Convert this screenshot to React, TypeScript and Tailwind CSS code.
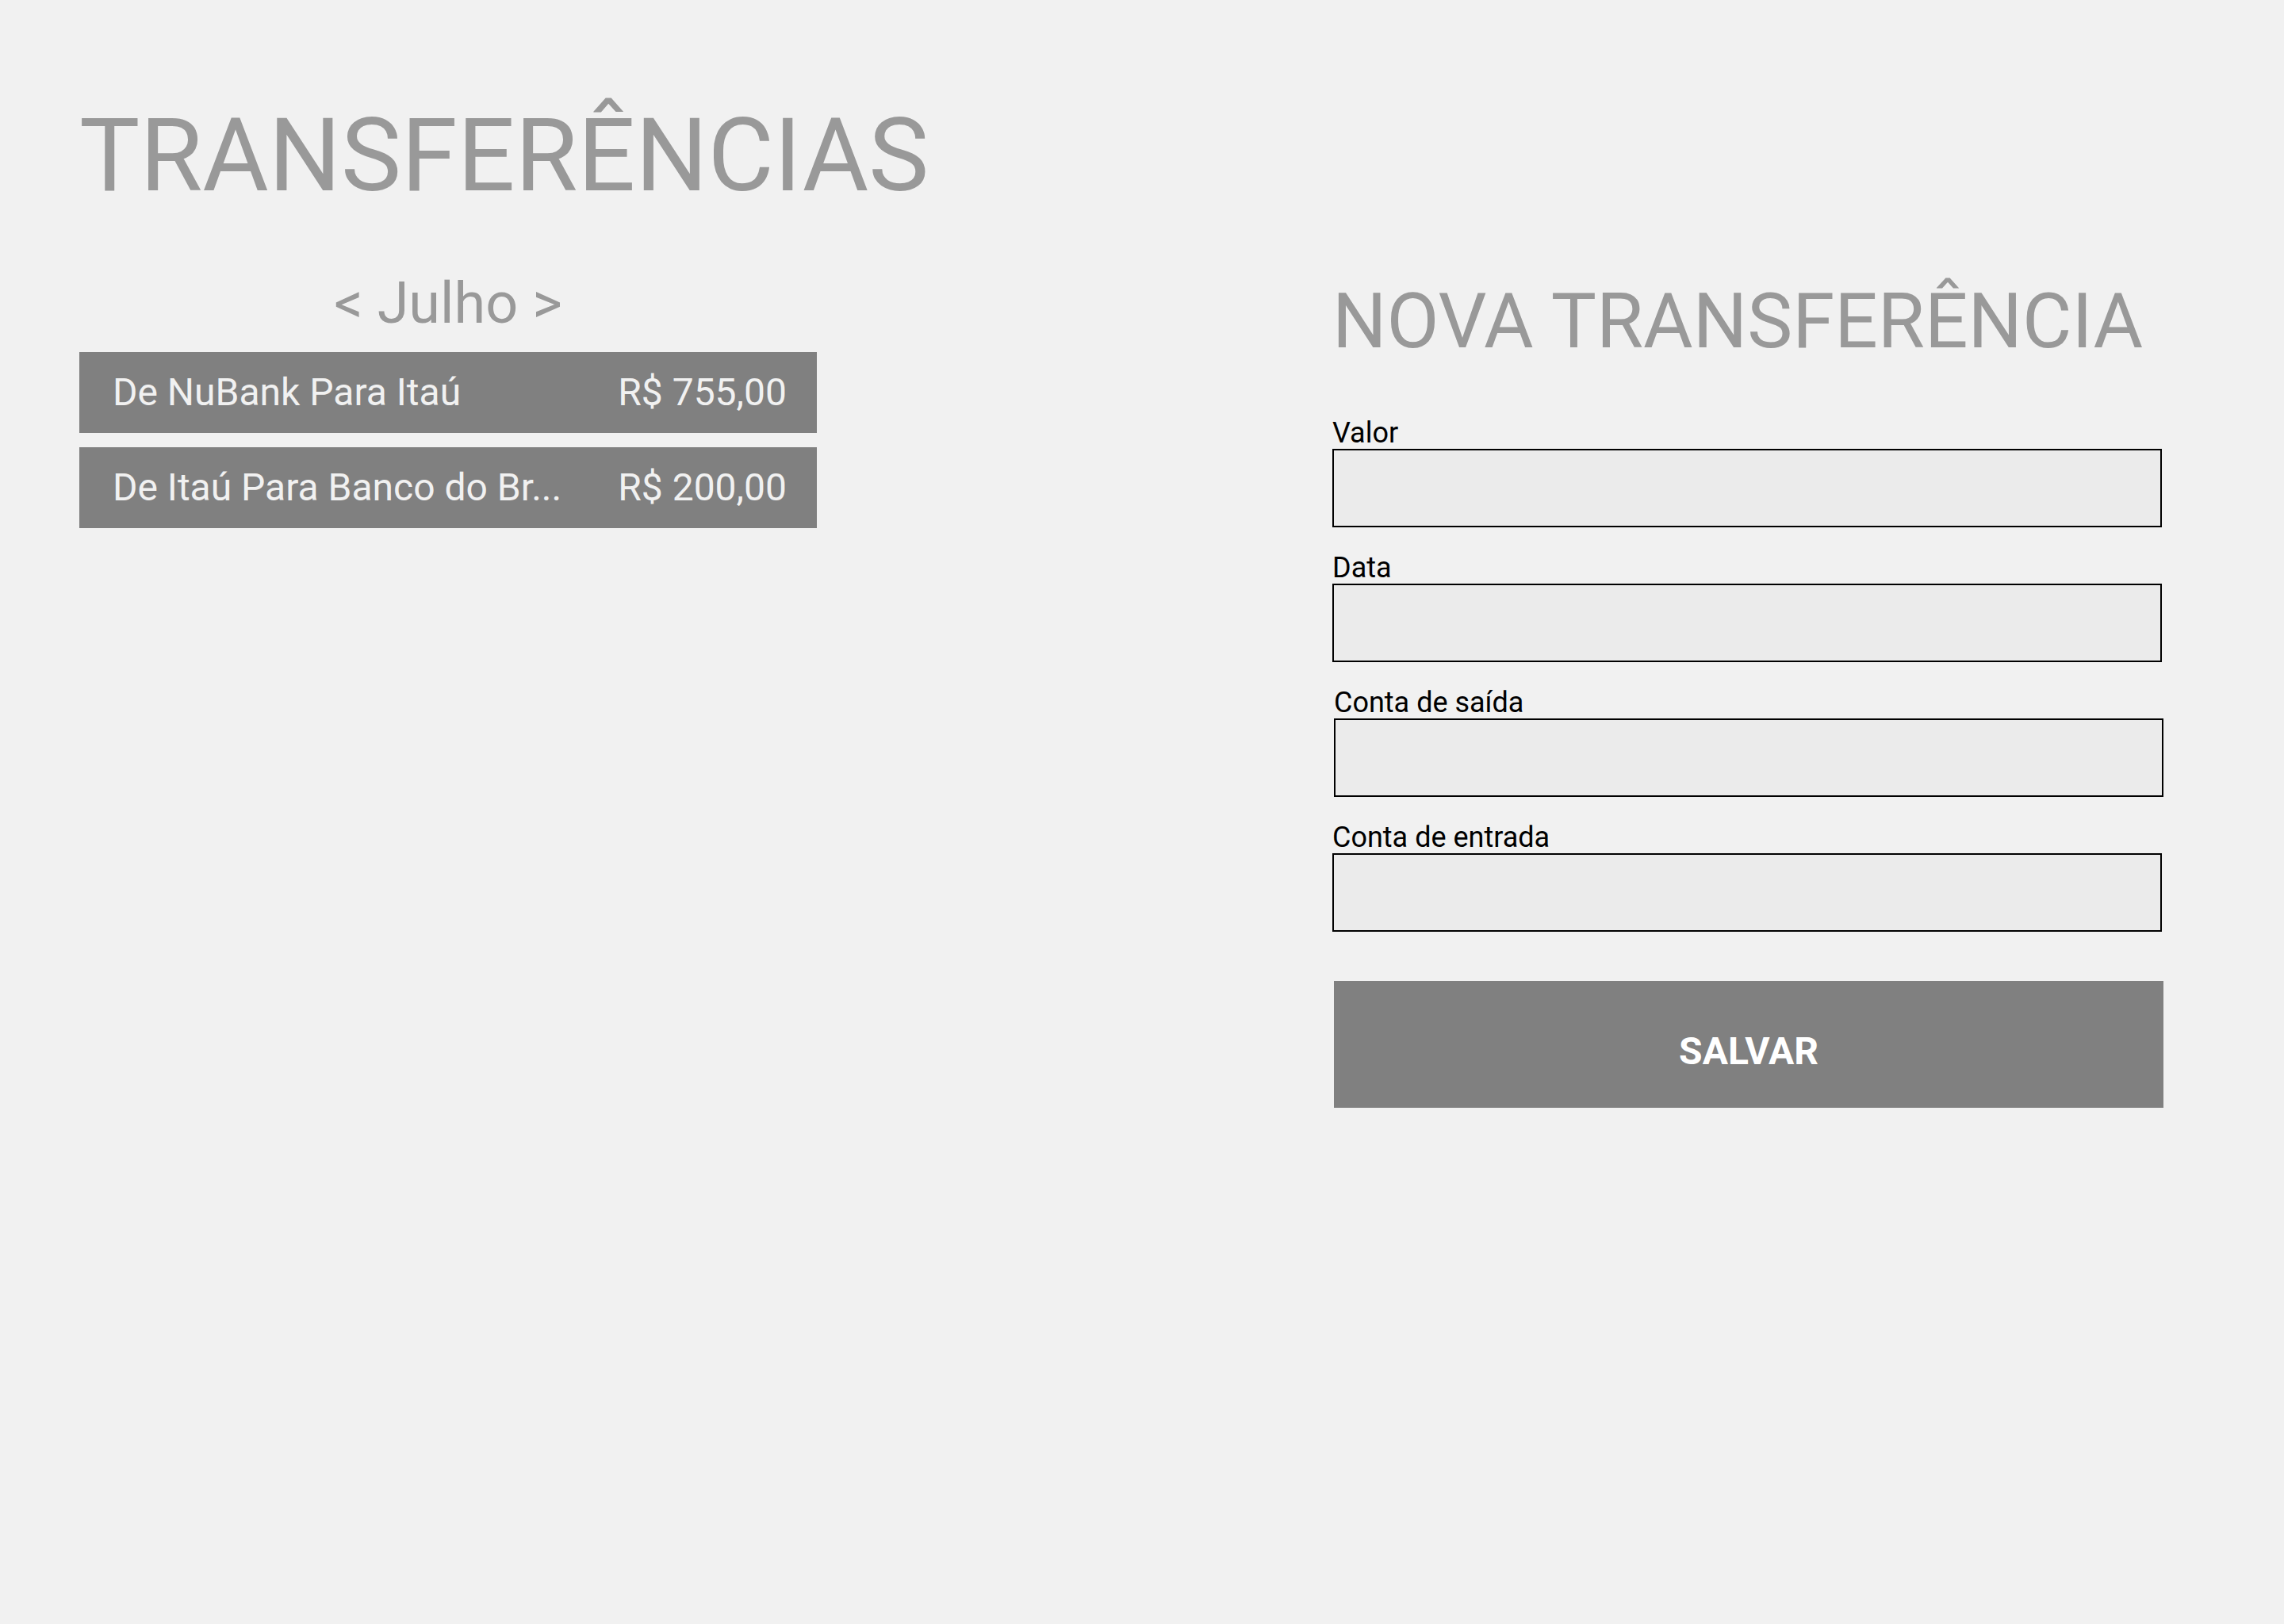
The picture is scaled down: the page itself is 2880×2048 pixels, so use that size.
const transfers = [
  { label: 'De NuBank Para Itaú', value: 'R$ 755,00' },
  { label: 'De Itaú Para Banco do Br...', value: 'R$ 200,00' },
];

const fields = [
  { label: 'Valor', shift: false },
  { label: 'Data', shift: false },
  { label: 'Conta de saída', shift: true },
  { label: 'Conta de entrada', shift: false },
];

export default function App() {
  return (
    <div className="min-h-[2048px] w-[2880px] bg-[#f1f1f1] font-['Roboto',sans-serif]">
      <div className="flex pl-[100px] pt-[132px]">
        <div className="w-[930px]">
          <h1 className="text-[128px] leading-none font-normal text-[#999999]">TRANSFERÊNCIAS</h1>
          <div className="mt-[87px] text-center text-[72px] leading-none text-[#999999]">&lt; Julho &gt;</div>
          <div className="mt-[25px] flex flex-col gap-[18px]">
            {transfers.map((t) => (
              <div
                key={t.label}
                className="flex h-[102px] items-center justify-between bg-[#808080] pl-[42px] pr-[38px] text-[48px] leading-none text-[#f1f1f1]"
              >
                <span>{t.label}</span>
                <span>{t.value}</span>
              </div>
            ))}
          </div>
        </div>

        <div className="ml-[650px] mt-[225px] w-[1046px]">
          <h2 className="text-[96px] leading-none font-normal text-[#999999]">NOVA TRANSFERÊNCIA</h2>
          <div className="mt-[75px] flex flex-col gap-[33px]">
            {fields.map((f) => (
              <div key={f.label} className={f.shift ? 'ml-[2px] mr-[-2px]' : ''}>
                <label className="block text-[36px] leading-none text-black">{f.label}</label>
                <input className="mt-[2px] block h-[99px] w-full border-2 border-black bg-[#ebebeb] outline-none" />
              </div>
            ))}
          </div>
          <button className="ml-[2px] mt-[62px] flex h-[160px] w-full items-center justify-center bg-[#808080] pt-[18px] text-[48px] font-bold leading-none text-white">
            SALVAR
          </button>
        </div>
      </div>
    </div>
  );
}
